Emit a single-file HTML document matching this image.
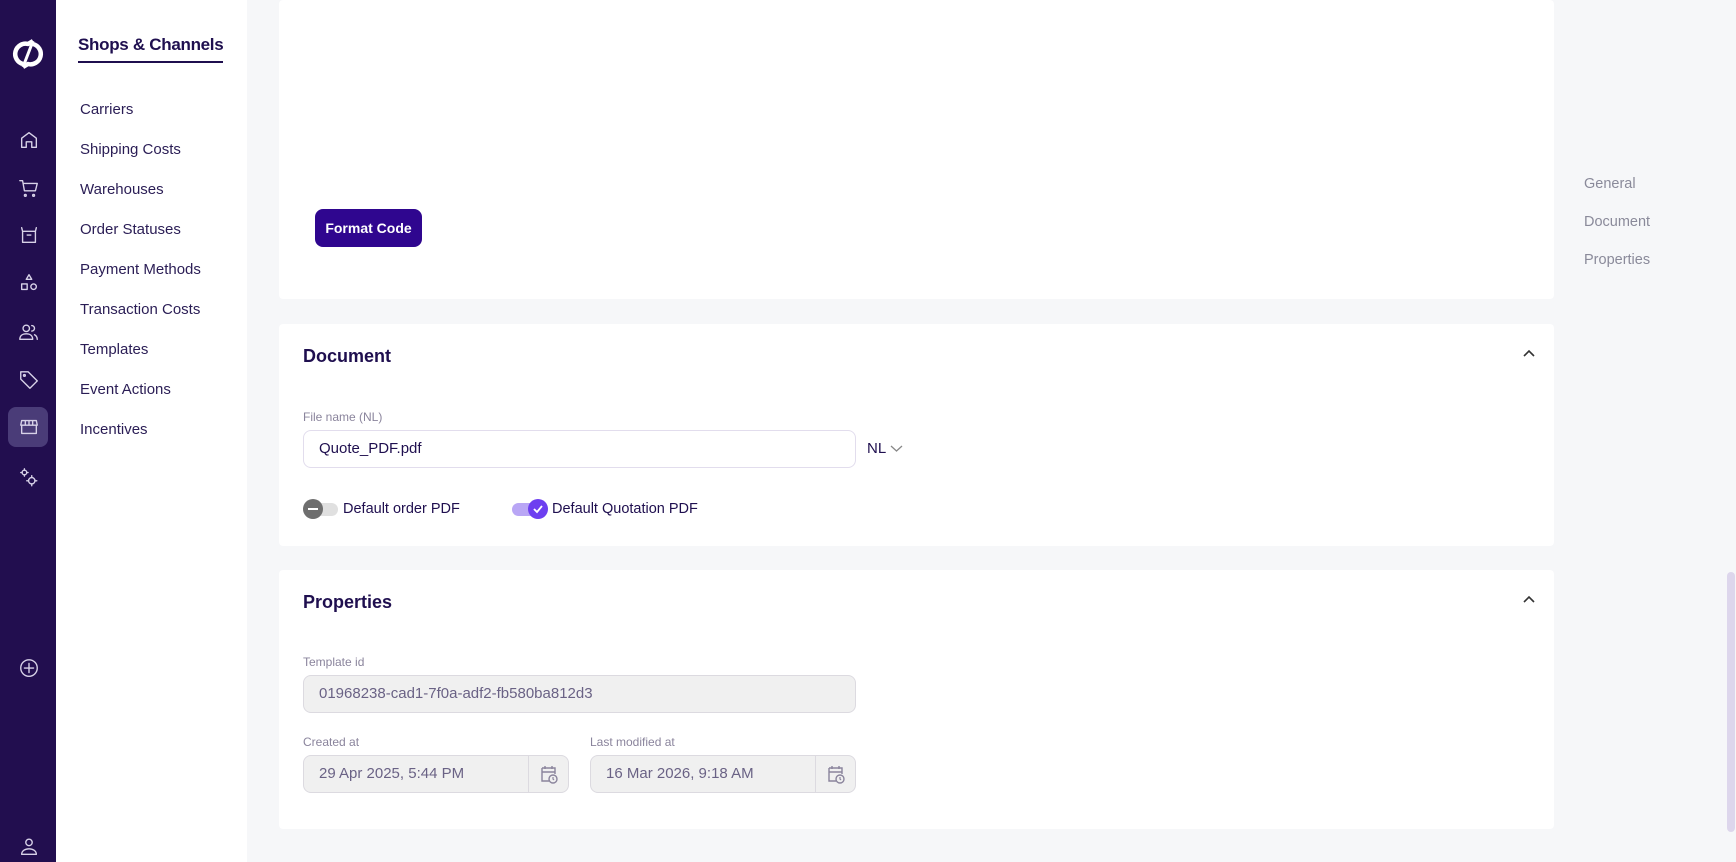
<!DOCTYPE html>
<html><head><meta charset="utf-8"><style>
*{box-sizing:border-box;margin:0;padding:0}
body{width:1736px;height:862px;overflow:hidden;background:#f6f7f9;font-family:"Liberation Sans",sans-serif;position:relative;color:#1f0f4f}
.side{position:absolute;left:0;top:0;width:56px;height:862px;background:#220e4f}
.side svg{position:absolute;left:18px;width:22px;height:22px;fill:none;stroke:#d8d2e8;stroke-width:1.5;stroke-linecap:round;stroke-linejoin:round}
.active{position:absolute;left:8px;top:407px;width:40px;height:40px;border-radius:8px;background:#4a3c78}
.sub{position:absolute;left:56px;top:0;width:191px;height:862px;background:#fff}
.sub h1{position:absolute;left:22px;top:35px;font-size:17px;letter-spacing:-0.3px;font-weight:bold;color:#1f0f4f;border-bottom:2px solid #1f0f4f;padding-bottom:6px;white-space:nowrap}
.sub a{position:absolute;left:24px;font-size:15px;color:#2a1d55}
.card{position:absolute;left:279px;width:1275px;background:#fff;border-radius:4px}
.title{position:absolute;left:24px;font-size:18px;font-weight:bold;color:#1f0f4f}
.chev{position:absolute;right:18px;width:14px;height:10px}
.lbl{position:absolute;font-size:12px;color:#8a849c}
.inp{position:absolute;height:38px;border:1px solid #e2dded;border-radius:8px;font-size:15px;padding-left:15px;line-height:36px;color:#1f0f4f}
.dis{background:#f0f0f0;border-color:#dcdae0;color:#6a6285}
.cal{position:absolute;right:0;top:0;width:40px;height:36px;border-left:1px solid #dcdae0}
.rn{position:absolute;left:1584px;font-size:14.5px;color:#8a8a9a}
</style></head><body>
<div class="side">
<svg style="left:12px;top:37px;width:32px;height:34px;stroke:#fff;stroke-width:4.5;stroke-linecap:butt" viewBox="0 0 32 34"><path d="M11 27 A10 10 0 0 1 16 7 L21 4"/><path d="M21 7 A10 10 0 0 1 16 27 L11 30"/><path d="M21 4 L11 30" stroke-width="3"/></svg>
<svg style="top:129px" viewBox="0 0 24 24"><path d="M4 20V10l8-6 8 6v10h-5v-6h-6v6z"/></svg>
<svg style="top:177px" viewBox="0 0 24 24"><path d="M2 4h3l2 11h12l2-8H6"/><circle cx="8" cy="20" r="1"/><circle cx="17" cy="20" r="1"/></svg>
<svg style="top:224px" viewBox="0 0 24 24"><path d="M4 4l1 4h14l1-4M5 8v12h14V8M10 12h4"/></svg>
<svg style="top:272px" viewBox="0 0 24 24"><path d="M12 3l3 5H9z"/><rect x="4" y="13" width="6" height="6"/><circle cx="17" cy="16" r="3"/></svg>
<svg style="top:321px" viewBox="0 0 24 24"><circle cx="9" cy="8" r="3.5"/><path d="M2 20c0-4 3-6 7-6s7 2 7 6zM15 5a3 3 0 0 1 0 6M18 15c2 1 3 3 3 5"/></svg>
<svg style="top:369px" viewBox="0 0 24 24"><path d="M3 3h8l10 10-8 8L3 11z"/><circle cx="7" cy="7" r="1"/></svg>
<div class="active"></div>
<svg style="top:416px" viewBox="0 0 24 24"><path d="M4 5h16l1 5H3zM4 10v9h16v-9M8 5v5M12 5v5M16 5v5"/></svg>
<svg style="top:467px" viewBox="0 0 24 24"><circle cx="7" cy="6" r="2.5"/><circle cx="15" cy="15" r="3.5"/><path d="M7 2v1.5M7 8.5V10M3 6h1.5M9.5 6H11M15 9.5v2M15 18.5v2M9.5 15h2M18.5 15h2"/></svg>
<svg style="top:657px" viewBox="0 0 24 24"><circle cx="12" cy="12" r="9"/><path d="M12 7v10M7 12h10"/></svg>
<svg style="top:836px" viewBox="0 0 24 24"><circle cx="12" cy="7" r="3.5"/><path d="M4 20c0-4 4-6 8-6s8 2 8 6z"/></svg>
</div>
<div class="sub">
<h1>Shops &amp; Channels</h1>
<a style="top:101px">Carriers</a>
<a style="top:141px">Shipping Costs</a>
<a style="top:181px">Warehouses</a>
<a style="top:221px">Order Statuses</a>
<a style="top:261px">Payment Methods</a>
<a style="top:301px">Transaction Costs</a>
<a style="top:341px">Templates</a>
<a style="top:381px">Event Actions</a>
<a style="top:421px">Incentives</a>
</div>

<div class="card" style="top:0;height:299px">
<div style="position:absolute;left:36px;top:209px;width:107px;height:38px;background:#2f068f;border-radius:8px;color:#fff;font-size:14px;font-weight:bold;text-align:center;line-height:38px">Format Code</div>
</div>

<div class="card" style="top:324px;height:222px">
<div class="title" style="top:22px">Document</div>
<svg class="chev" style="top:25px" viewBox="0 0 14 10"><path d="M2 7l5-5 5 5" fill="none" stroke="#333" stroke-width="1.6"/></svg>
<div class="lbl" style="left:24px;top:86px">File name (NL)</div>
<div class="inp" style="left:24px;top:106px;width:553px">Quote_PDF.pdf</div>
<div style="position:absolute;left:588px;top:116px;font-size:15px">NL</div>
<svg style="position:absolute;left:611px;top:120px;width:13px;height:9px" viewBox="0 0 13 9"><path d="M1 2l5.5 5L12 2" fill="none" stroke="#888" stroke-width="1.3"/></svg>
<div style="position:absolute;left:24px;top:179px;width:35px;height:13px;border-radius:7px;background:#e0e0e0"></div>
<div style="position:absolute;left:24px;top:175px;width:20px;height:20px;border-radius:50%;background:#6e6e6e"></div>
<div style="position:absolute;left:29px;top:184px;width:10px;height:2px;background:#fff"></div>
<div style="position:absolute;left:64px;top:177px;font-size:14.5px">Default order PDF</div>
<div style="position:absolute;left:233px;top:179px;width:35px;height:13px;border-radius:7px;background:#b9a6f5"></div>
<div style="position:absolute;left:249px;top:175px;width:20px;height:20px;border-radius:50%;background:#6d3ff0"></div>
<svg style="position:absolute;left:252px;top:178px;width:14px;height:14px" viewBox="0 0 14 14"><path d="M3 7l3 3 5-6" fill="none" stroke="#fff" stroke-width="1.8"/></svg>
<div style="position:absolute;left:273px;top:177px;font-size:14.5px">Default Quotation PDF</div>
</div>

<div class="card" style="top:570px;height:259px">
<div class="title" style="top:22px">Properties</div>
<svg class="chev" style="top:25px" viewBox="0 0 14 10"><path d="M2 7l5-5 5 5" fill="none" stroke="#333" stroke-width="1.6"/></svg>
<div class="lbl" style="left:24px;top:85px">Template id</div>
<div class="inp dis" style="left:24px;top:105px;width:553px">01968238-cad1-7f0a-adf2-fb580ba812d3</div>
<div class="lbl" style="left:24px;top:165px">Created at</div>
<div class="inp dis" style="left:24px;top:185px;width:266px">29 Apr 2025, 5:44 PM<div class="cal"><svg style="position:absolute;left:11px;top:8px;width:18px;height:20px" viewBox="0 0 18 20"><path d="M2 4h13v6M2 4v13h7M2 8h13M5 2v3M12 2v3" fill="none" stroke="#8a849c" stroke-width="1.4"/><circle cx="13" cy="15" r="4" fill="none" stroke="#8a849c" stroke-width="1.4"/><path d="M13 13v2l1 1" fill="none" stroke="#8a849c" stroke-width="1.2"/></svg></div></div>
<div class="lbl" style="left:311px;top:165px">Last modified at</div>
<div class="inp dis" style="left:311px;top:185px;width:266px">16 Mar 2026, 9:18 AM<div class="cal"><svg style="position:absolute;left:11px;top:8px;width:18px;height:20px" viewBox="0 0 18 20"><path d="M2 4h13v6M2 4v13h7M2 8h13M5 2v3M12 2v3" fill="none" stroke="#8a849c" stroke-width="1.4"/><circle cx="13" cy="15" r="4" fill="none" stroke="#8a849c" stroke-width="1.4"/><path d="M13 13v2l1 1" fill="none" stroke="#8a849c" stroke-width="1.2"/></svg></div></div>
</div>

<div class="rn" style="top:176px">General</div>
<div class="rn" style="top:214px">Document</div>
<div class="rn" style="top:252px">Properties</div>
<div style="position:absolute;left:1727px;top:572px;width:8px;height:260px;border-radius:4px;background:#ddd6ec"></div>
</body></html>
